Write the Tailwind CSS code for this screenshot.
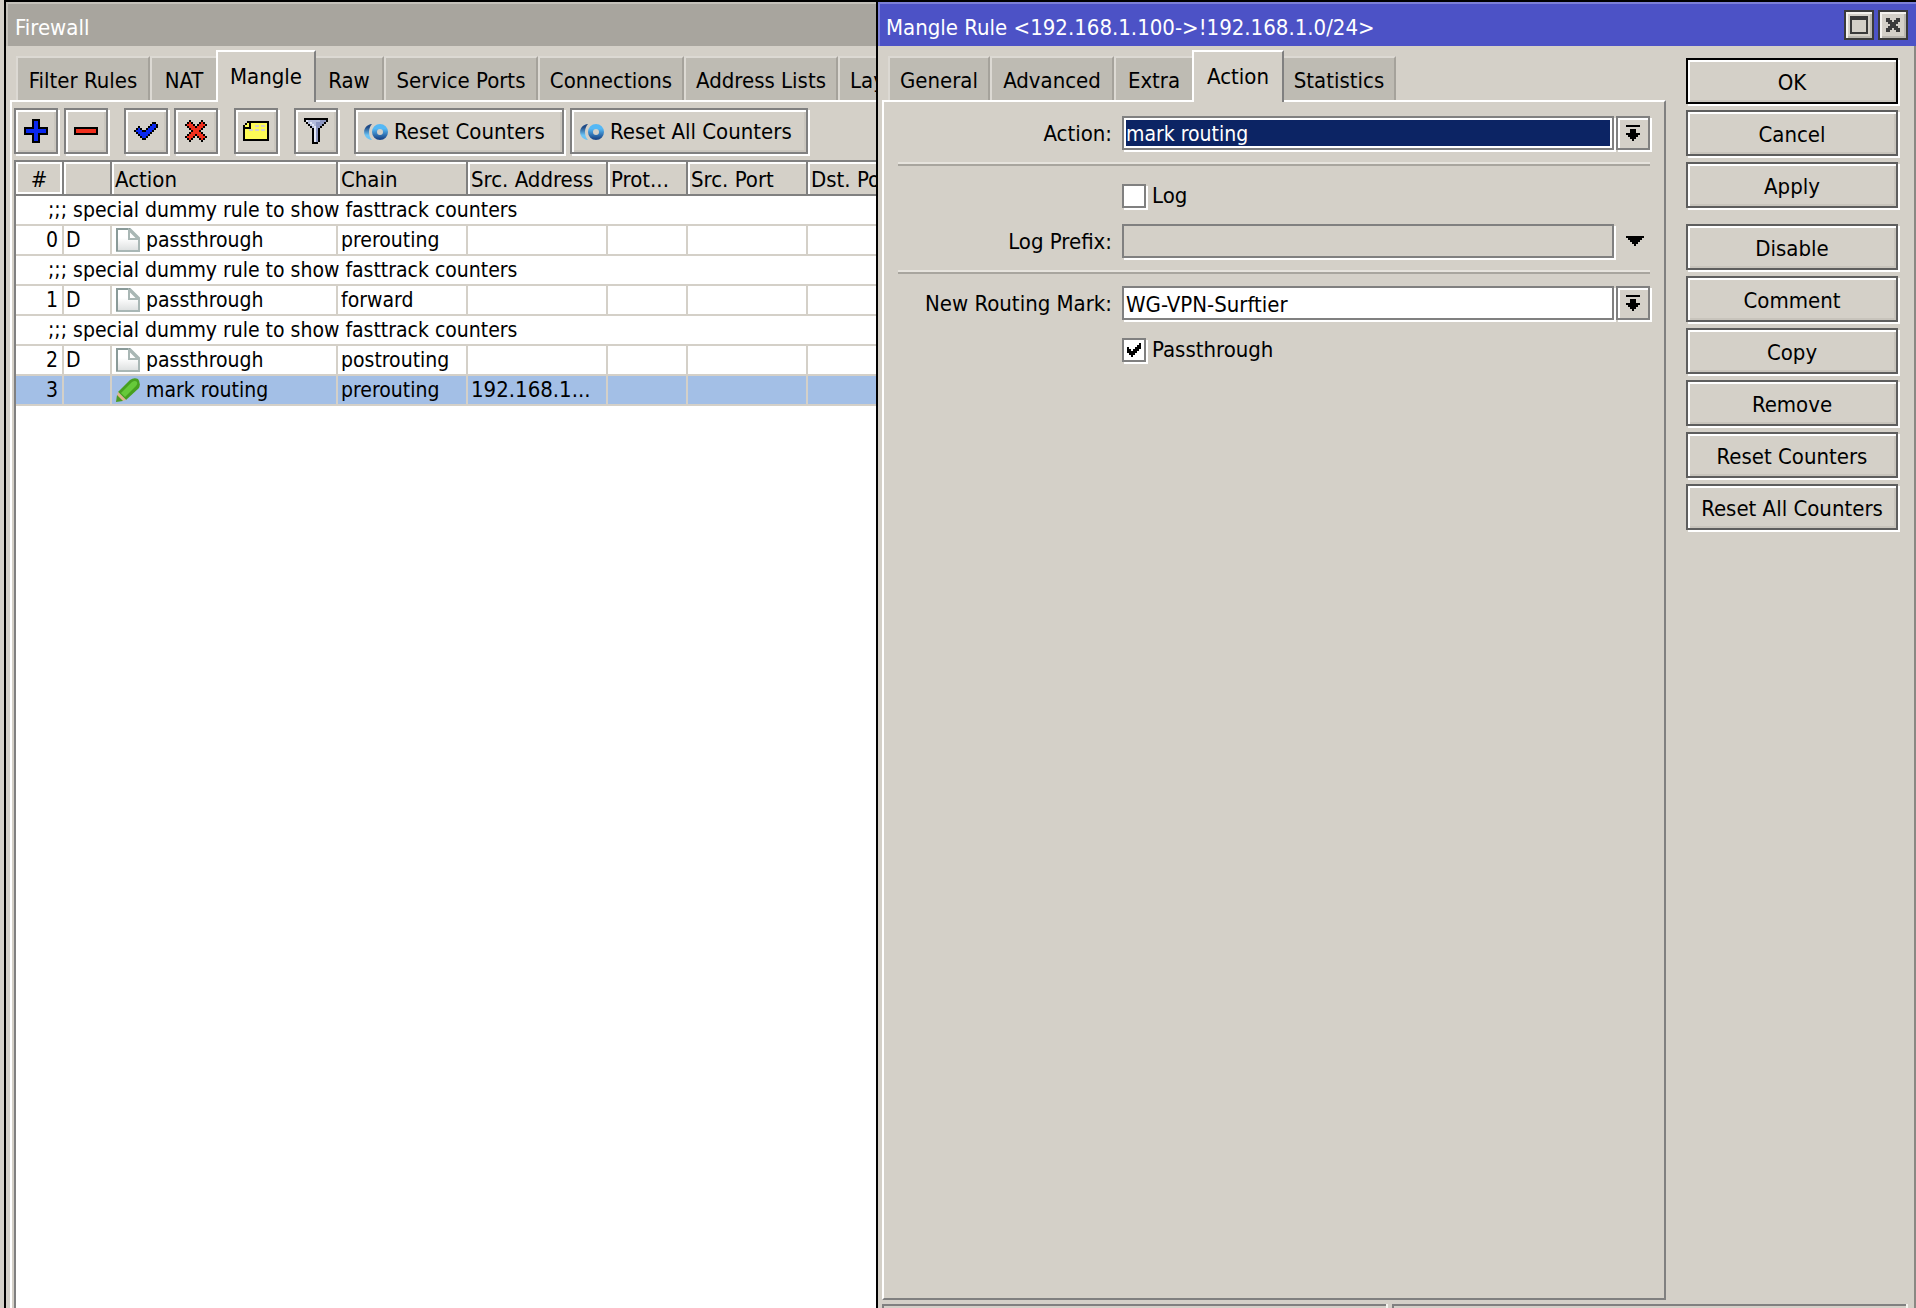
<!DOCTYPE html>
<html lang="en">
<head>
  <meta charset="UTF-8" />
  <meta name="viewport" content="width=device-width, initial-scale=1.0"/>
  <title>Firewall | Mangle Rule</title>
  <script src="https://cdn.jsdelivr.net/npm/@tailwindcss/browser@4"></script>
</head>
<body class="flex h-screen overflow-hidden bg-[#d4d0c8] pl-1 font-['DejaVu_Sans_Condensed','DejaVu_Sans',sans-serif] text-[22px] leading-7 text-black">

  <!-- Firewall window -->
  <section class="flex w-[872px] shrink-0 flex-col overflow-hidden border-l-2 border-t-2 border-black">
    <header class="h-11 shrink-0 border-l-2 border-t-2 border-[#c4c1ba] bg-[#a8a59e] pl-[7px] pt-2.5 text-white">
      <h1>Firewall</h1>
    </header>

    <nav class="flex h-[54px] shrink-0 items-end pl-2.5 whitespace-nowrap">
      <button class="h-11 w-[134px] shrink-0 border-l-2 border-r-2 border-t-2 border-[#dcd9d3] border-r-[#a5a29b] bg-[#bebbb3] pt-1">Filter Rules</button>
      <button class="h-11 w-[66px] shrink-0 border-l-2 border-t-2 border-[#dcd9d3] bg-[#bebbb3] pt-1">NAT</button>
      <button class="z-10 -mb-0.5 h-[52px] w-[100px] shrink-0 border-l-2 border-r-2 border-t-2 border-white border-r-[#808080] bg-[#d4d0c8]">Mangle</button>
      <button class="h-11 w-[68px] shrink-0 border-r-2 border-t-2 border-[#dcd9d3] border-r-[#a5a29b] bg-[#bebbb3] pt-1">Raw</button>
      <button class="h-11 w-[154px] shrink-0 border-l-2 border-r-2 border-t-2 border-[#dcd9d3] border-r-[#a5a29b] bg-[#bebbb3] pt-1">Service Ports</button>
      <button class="h-11 w-[146px] shrink-0 border-l-2 border-r-2 border-t-2 border-[#dcd9d3] border-r-[#a5a29b] bg-[#bebbb3] pt-1">Connections</button>
      <button class="h-11 w-[154px] shrink-0 border-l-2 border-r-2 border-t-2 border-[#dcd9d3] border-r-[#a5a29b] bg-[#bebbb3] pt-1">Address Lists</button>
      <button class="h-11 min-w-0 flex-1 overflow-hidden border-l-2 border-t-2 border-[#dcd9d3] bg-[#bebbb3] pl-2.5 pt-1 text-left">Layer7</button>
    </nav>

    <div class="ml-1 flex min-h-0 flex-1 flex-col border-l-2 border-t-2 border-white pl-0.5">
      <div class="flex h-[58px] shrink-0 gap-1.5 pt-1.5 whitespace-nowrap">
        <button aria-label="Add" class="grid h-[46px] w-11 place-items-center border-2 border-[#808080] shadow-[2px_2px_0_#fff,inset_2px_2px_0_#fff,inset_-2px_-2px_0_#cac6be]"><svg data-art="plus"></svg></button>
        <button aria-label="Remove" class="mr-2.5 grid h-[46px] w-11 place-items-center border-2 border-[#808080] shadow-[2px_2px_0_#fff,inset_2px_2px_0_#fff,inset_-2px_-2px_0_#cac6be]"><svg data-art="minus"></svg></button>
        <button aria-label="Enable" class="grid h-[46px] w-11 place-items-center border-2 border-[#808080] shadow-[2px_2px_0_#fff,inset_2px_2px_0_#fff,inset_-2px_-2px_0_#cac6be]"><svg data-art="check"></svg></button>
        <button aria-label="Disable" class="mr-2.5 grid h-[46px] w-11 place-items-center border-2 border-[#808080] shadow-[2px_2px_0_#fff,inset_2px_2px_0_#fff,inset_-2px_-2px_0_#cac6be]"><svg data-art="cross"></svg></button>
        <button aria-label="Comment" class="mr-2.5 grid h-[46px] w-11 place-items-center border-2 border-[#808080] shadow-[2px_2px_0_#fff,inset_2px_2px_0_#fff,inset_-2px_-2px_0_#cac6be]"><svg data-art="note"></svg></button>
        <button aria-label="Filter" class="mr-2.5 grid h-[46px] w-11 place-items-center border-2 border-[#808080] shadow-[2px_2px_0_#fff,inset_2px_2px_0_#fff,inset_-2px_-2px_0_#cac6be]"><svg data-art="funnel"></svg></button>
        <button class="flex h-[46px] w-[210px] items-center gap-1.5 border-2 border-[#808080] pl-2 pt-0.5 shadow-[2px_2px_0_#fff,inset_2px_2px_0_#fff,inset_-2px_-2px_0_#cac6be]">
          <svg width="24" height="16" viewBox="0 0 24 16" fill="none">
            <defs>
              <linearGradient id="ring" x1="0" y1="0" x2="0" y2="16" gradientUnits="userSpaceOnUse"><stop offset=".3" stop-color="#55b8f5"/><stop offset=".9" stop-color="#1c4a8c"/></linearGradient>
              <linearGradient id="arc" x1="0" y1="0" x2="0" y2="16" gradientUnits="userSpaceOnUse"><stop offset=".2" stop-color="#1f4a86"/><stop offset=".7" stop-color="#6cc4f5"/></linearGradient>
            </defs>
            <path d="M8 0C-2.500 1-2.500 15 8 16C4 12 4 4 8 0z" fill="url(#arc)"/>
            <circle cx="16" cy="8" r="5.500" stroke="url(#ring)" stroke-width="5"/>
          </svg>
          <span>Reset Counters</span>
        </button>
        <button class="flex h-[46px] w-[238px] items-center gap-1.5 border-2 border-[#808080] pl-2 pt-0.5 shadow-[2px_2px_0_#fff,inset_2px_2px_0_#fff,inset_-2px_-2px_0_#cac6be]">
          <svg width="24" height="16" viewBox="0 0 24 16" fill="none">
            <path d="M8 0C-2.500 1-2.500 15 8 16C4 12 4 4 8 0z" fill="url(#arc)"/>
            <circle cx="16" cy="8" r="5.500" stroke="url(#ring)" stroke-width="5"/>
          </svg>
          <span>Reset All Counters</span>
        </button>
      </div>

      <div class="min-h-0 flex-1 overflow-hidden border-l-2 border-t-2 border-[#808080] bg-white">
        <table class="w-[912px] table-fixed border-separate border-spacing-0 whitespace-nowrap text-left">
          <colgroup>
            <col class="w-12"><col class="w-12"><col class="w-[226px]"><col class="w-[130px]"><col class="w-[140px]"><col class="w-20"><col class="w-[120px]"><col class="w-[120px]">
          </colgroup>
          <thead class="bg-[#d4d0c8]">
            <tr class="h-[34px] *:border-b-2 *:border-r-2 *:border-[#808080] *:pt-1 *:font-normal">
              <th class="text-center shadow-[inset_0_0_0_2px_#fff]">#</th>
              <th class="shadow-[inset_2px_2px_0_#fff]"></th>
              <th class="pl-[3px] shadow-[inset_2px_2px_0_#fff]">Action</th>
              <th class="pl-[3px] shadow-[inset_2px_2px_0_#fff]">Chain</th>
              <th class="pl-[3px] shadow-[inset_2px_2px_0_#fff]">Src. Address</th>
              <th class="pl-[3px] shadow-[inset_2px_2px_0_#fff]">Prot...</th>
              <th class="pl-[3px] shadow-[inset_2px_2px_0_#fff]">Src. Port</th>
              <th class="pl-[3px] shadow-[inset_2px_2px_0_#fff]">Dst. Port</th>
            </tr>
          </thead>
          <tbody class="text-[21px]">
            <tr class="h-[30px]"><td colspan="8" class="border-b-2 border-[#d4d0c8] pl-8">;;; special dummy rule to show fasttrack counters</td></tr>
            <tr class="h-[30px] *:border-b-2 *:border-r-2 *:border-[#d4d0c8]">
              <td class="pr-1 text-right">0</td><td class="pl-0.5">D</td>
              <td class="pl-1"><div class="flex items-center gap-1.5"><svg width="24" height="24" viewBox="0 0 24 24"><use href="#page"/></svg>passthrough</div></td>
              <td class="pl-[3px]">prerouting</td><td></td><td></td><td></td><td></td>
            </tr>
            <tr class="h-[30px]"><td colspan="8" class="border-b-2 border-[#d4d0c8] pl-8">;;; special dummy rule to show fasttrack counters</td></tr>
            <tr class="h-[30px] *:border-b-2 *:border-r-2 *:border-[#d4d0c8]">
              <td class="pr-1 text-right">1</td><td class="pl-0.5">D</td>
              <td class="pl-1"><div class="flex items-center gap-1.5"><svg width="24" height="24" viewBox="0 0 24 24"><use href="#page"/></svg>passthrough</div></td>
              <td class="pl-[3px]">forward</td><td></td><td></td><td></td><td></td>
            </tr>
            <tr class="h-[30px]"><td colspan="8" class="border-b-2 border-[#d4d0c8] pl-8">;;; special dummy rule to show fasttrack counters</td></tr>
            <tr class="h-[30px] *:border-b-2 *:border-r-2 *:border-[#d4d0c8]">
              <td class="pr-1 text-right">2</td><td class="pl-0.5">D</td>
              <td class="pl-1"><div class="flex items-center gap-1.5"><svg width="24" height="24" viewBox="0 0 24 24"><use href="#page"/></svg>passthrough</div></td>
              <td class="pl-[3px]">postrouting</td><td></td><td></td><td></td><td></td>
            </tr>
            <tr class="h-[30px] bg-[#a3bfe6] *:border-b-2 *:border-r-2 *:border-[#d4d0c8]">
              <td class="pr-1 text-right">3</td><td></td>
              <td class="pl-1"><div class="flex items-center gap-1.5">
                <svg width="24" height="24" viewBox="0 0 24 24">
                  <path d="M2 14L14 2Q18-1 22 1Q25 5 23 10L10 22z" fill="#46a01f"/>
                  <path d="M5 15L16 4Q19 2 21 4Q22 6 20 8L9 19z" fill="#66c93a"/>
                  <path d="M2 14L10 22L6 23L1 18z" fill="#e0b48c"/>
                  <path d="M1 17L7 23L0 24z" fill="#4c9a22"/>
                </svg>mark routing</div></td>
              <td class="pl-[3px]">prerouting</td><td class="pl-[3px] text-[22px]">192.168.1...</td><td></td><td></td><td></td>
            </tr>
          </tbody>
        </table>
      </div>
    </div>
  </section>

  <!-- Mangle rule dialog -->
  <section class="flex min-w-0 flex-1 flex-col border-l-2 border-t-2 border-black">
    <header class="flex h-11 shrink-0 items-start border-l-2 border-t-2 border-[#7b7fd8] bg-[#4c52c6] pl-1.5 pr-2 pt-1.5 text-white">
      <h2 class="flex-1 pt-1">Mangle Rule &lt;192.168.1.100-&gt;!192.168.1.0/24&gt;</h2>
      <button aria-label="Maximize" class="mr-1 grid size-[30px] place-items-center border-2 border-[#3a3a3a] bg-[#d4d0c8] shadow-[inset_2px_2px_0_#f4f2ee,inset_-2px_-2px_0_#bab7b0]"><span class="size-[18px] border-2 border-t-4 border-[#3a3a3a]"></span></button>
      <button aria-label="Close" class="grid size-[30px] place-items-center border-2 border-[#3a3a3a] bg-[#d4d0c8] shadow-[inset_2px_2px_0_#f4f2ee,inset_-2px_-2px_0_#bab7b0]"><svg data-art="close"></svg></button>
    </header>

    <div class="flex min-h-0 flex-1 border-r-2 border-[#8a8883]">
      <div class="ml-1 flex min-w-0 flex-1 flex-col">
        <nav class="flex h-[54px] shrink-0 items-end pl-1.5 whitespace-nowrap">
          <button class="h-11 w-[102px] border-l-2 border-r-2 border-t-2 border-[#dcd9d3] border-r-[#a5a29b] bg-[#bebbb3] pt-1">General</button>
          <button class="h-11 w-[124px] border-l-2 border-r-2 border-t-2 border-[#dcd9d3] border-r-[#a5a29b] bg-[#bebbb3] pt-1">Advanced</button>
          <button class="h-11 w-[78px] border-l-2 border-t-2 border-[#dcd9d3] bg-[#bebbb3] pt-1">Extra</button>
          <button class="z-10 -mb-0.5 h-[52px] w-[92px] border-l-2 border-r-2 border-t-2 border-white border-r-[#808080] bg-[#d4d0c8]">Action</button>
          <button class="h-11 w-[112px] border-r-2 border-t-2 border-[#dcd9d3] border-r-[#a5a29b] bg-[#bebbb3] pt-1">Statistics</button>
        </nav>

        <form class="flex-1 border-2 border-white border-b-[#808080] border-r-[#808080] px-3.5 pt-3.5">
          <div class="flex items-center">
            <label for="action" class="w-[224px] pr-2.5 pt-0.5 text-right">Action:</label>
            <div class="flex-1 border-2 border-[#808080] bg-white p-0.5 shadow-[2px_2px_0_#fff]">
              <select id="action" class="block h-[26px] w-full appearance-none bg-[#0c2464] pt-0.5 text-[21px] leading-6 text-white">
                <option>mark routing</option>
              </select>
            </div>
            <button type="button" aria-label="Choose action" class="ml-0.5 grid h-[34px] w-[34px] place-items-center border-2 border-[#808080] shadow-[2px_2px_0_#fff,inset_2px_2px_0_#fff]"><svg data-art="drop"></svg></button>
          </div>

          <hr class="mt-3 border-b-2 border-t-2 border-b-[#a8a59e] border-t-[#e6e3dd]">

          <div class="mt-4 flex items-center pl-[224px]">
            <input id="log" type="checkbox" class="size-6 appearance-none border-2 border-[#808080] bg-white shadow-[2px_2px_0_#fff]">
            <label for="log" class="pl-1.5">Log</label>
          </div>

          <div class="mt-3.5 flex items-center">
            <label for="prefix" class="w-[224px] pr-2.5 pt-0.5 text-right">Log Prefix:</label>
            <input id="prefix" type="text" class="h-[34px] min-w-0 flex-1 border-2 border-[#808080] px-0.5 shadow-[2px_2px_0_#fff]">
            <button type="button" aria-label="Show log prefix" class="ml-0.5 grid h-[34px] w-[34px] place-items-center pl-1"><svg data-art="triangle"></svg></button>
          </div>

          <hr class="mt-3 border-b-2 border-t-2 border-b-[#a8a59e] border-t-[#e6e3dd]">

          <div class="mt-3 flex items-center">
            <label for="mark" class="w-[224px] pr-2.5 pt-0.5 text-right whitespace-nowrap">New Routing Mark:</label>
            <input id="mark" type="text" value="WG-VPN-Surftier" class="h-[34px] min-w-0 flex-1 border-2 border-[#808080] bg-white px-0.5 pt-0.5 shadow-[2px_2px_0_#fff]">
            <button type="button" aria-label="Choose routing mark" class="ml-0.5 grid h-[34px] w-[34px] place-items-center border-2 border-[#808080] shadow-[2px_2px_0_#fff,inset_2px_2px_0_#fff]"><svg data-art="drop"></svg></button>
          </div>

          <div class="mt-4 flex items-center pl-[224px]">
            <span class="grid place-items-center">
              <input id="pass" type="checkbox" checked class="peer col-start-1 row-start-1 size-6 appearance-none border-2 border-[#808080] bg-white shadow-[2px_2px_0_#fff]">
              <svg data-art="tick" class="pointer-events-none invisible col-start-1 row-start-1 peer-checked:visible"></svg>
            </span>
            <label for="pass" class="pl-1.5">Passthrough</label>
          </div>
        </form>
      </div>

      <div class="flex w-[248px] shrink-0 flex-col gap-1.5 pl-5 pr-4 pt-3">
        <button class="h-[46px] border-2 border-black pt-1 shadow-[2px_2px_0_#fff,inset_2px_2px_0_#fff,inset_-2px_-2px_0_#c8c4bc]">OK</button>
        <button class="h-[46px] border-2 border-[#5e5e5e] pt-1 shadow-[2px_2px_0_#fff,inset_2px_2px_0_#fff,inset_-2px_-2px_0_#c8c4bc]">Cancel</button>
        <button class="mb-2.5 h-[46px] border-2 border-[#5e5e5e] pt-1 shadow-[2px_2px_0_#fff,inset_2px_2px_0_#fff,inset_-2px_-2px_0_#c8c4bc]">Apply</button>
        <button class="h-[46px] border-2 border-[#5e5e5e] pt-1 shadow-[2px_2px_0_#fff,inset_2px_2px_0_#fff,inset_-2px_-2px_0_#c8c4bc]">Disable</button>
        <button class="h-[46px] border-2 border-[#5e5e5e] pt-1 shadow-[2px_2px_0_#fff,inset_2px_2px_0_#fff,inset_-2px_-2px_0_#c8c4bc]">Comment</button>
        <button class="h-[46px] border-2 border-[#5e5e5e] pt-1 shadow-[2px_2px_0_#fff,inset_2px_2px_0_#fff,inset_-2px_-2px_0_#c8c4bc]">Copy</button>
        <button class="h-[46px] border-2 border-[#5e5e5e] pt-1 shadow-[2px_2px_0_#fff,inset_2px_2px_0_#fff,inset_-2px_-2px_0_#c8c4bc]">Remove</button>
        <button class="h-[46px] border-2 border-[#5e5e5e] pt-1 shadow-[2px_2px_0_#fff,inset_2px_2px_0_#fff,inset_-2px_-2px_0_#c8c4bc]">Reset Counters</button>
        <button class="h-[46px] border-2 border-[#5e5e5e] pt-1 whitespace-nowrap shadow-[2px_2px_0_#fff,inset_2px_2px_0_#fff,inset_-2px_-2px_0_#c8c4bc]">Reset All Counters</button>
      </div>
    </div>

    <!-- Status bar -->
    <footer class="flex h-2 shrink-0 gap-1.5 border-r-2 border-[#8a8883] pl-1 pr-2 pt-1">
      <div class="w-[504px] border-l-2 border-t-2 border-[#808080] shadow-[2px_0_0_#f4f2ee]"></div>
      <div class="flex-1 border-l-2 border-t-2 border-[#808080] shadow-[2px_0_0_#f4f2ee]"></div>
    </footer>
  </section>

  <!-- Shared page icon -->
  <svg width="0" height="0" class="absolute">
    <defs>
      <linearGradient id="paper" x1="0" y1="0" x2="0" y2="1"><stop offset=".4" stop-color="#fff"/><stop offset="1" stop-color="#dcdfdf"/></linearGradient>
    </defs>
    <symbol id="page" viewBox="0 0 24 24">
      <path d="M1 1H14L23 10V23H1z" fill="url(#paper)" stroke="#a9b7b5" stroke-width="2"/>
      <path d="M1 23V1H14" fill="none" stroke="#8a9a98" stroke-width="2"/>
      <path d="M13 2V11H22z" fill="#fff" stroke="#a9b7b5" stroke-width="2"/>
    </symbol>
  </svg>

  <script>
    const colors = { K: '#000', D: '#3a3a3a', B: '#0a28f0', R: '#f0301e', Y: '#fdfb56', G: '#d4d0c8', W: '#e4e8f6', L: '#b4bcdc', M: '#8c96c0' };

    // each character is one 2x2 dot
    const art = {
      plus: ['....KKKK....', '....KBBK....', '....KBBK....', '....KBBK....', 'KKKKKBBKKKKK', 'KBBBBBBBBBBK', 'KBBBBBBBBBBK', 'KKKKKBBKKKKK', '....KBBK....', '....KBBK....', '....KBBK....', '....KKKK....'],
      minus: ['KKKKKKKKKKKK', 'KRRRRRRRRRRK', 'KRRRRRRRRRRK', 'KKKKKKKKKKKK'],
      check: ['.........KK.', '........KBBK', '..K....KBBBK', '.KBK..KBBBK.', 'KBBBKKBBBK..', '.KBBBBBBK...', '..KBBBBK....', '...KBBK.....', '....KK......'],
      cross: ['..K.....K..', '.KRK...KRK.', 'KRRRK.KRRRK', '.KRRRKRRRK.', '..KRRRRRK..', '...KRRRK...', '..KRRRRRK..', '.KRRRKRRRK.', 'KRRRK.KRRRK', '.KRK...KRK.', '..K.....K..'],
      note: ['..KKKKKKKKKKK', '.KYKYYYYYYYYK', 'KYYKYYGGYGGYK', 'KKKKYYYYYYYYK', 'KYYGGYGGYGGYK', 'KYYYYYYYYYYYK', 'KYYYYYYYYYYYK', 'KYYYYYYYYYYYK', 'KYYYYYYYYYYYK', 'KKKKKKKKKKKKK'],
      funnel: ['KKKKKKKKKKKK', 'KWLLLLLLMMMK', '.KLWLLMMMMK.', '..KLWLMMMK..', '...KLWMMK...', '....KWMK....', '....KWMK....', '....KWMK....', '....KWMK....', '....KWMK....', '....KWMK....', '....KWMK....', '....KKK.....'],
      close: ['DD...DD', 'DDD.DDD', '.DDDDD.', '..DDD..', '.DDDDD.', 'DDD.DDD', 'DD...DD'],
      drop: ['KKKKKKK', '.......', '..KKK..', '..KKK..', 'KKKKKKK', '.KKKKK.', '..KKK..', '...K...'],
      triangle: ['KKKKKKKKK', '.KKKKKKK.', '..KKKKK..', '...KKK...', '....K....'],
      tick: ['......K', '.....KK', 'K...KKK', 'KK.KKK.', 'KKKKK..', '.KKK...', '..K....']
    };

    document.querySelectorAll('svg[data-art]').forEach(svg => {
      const rows = art[svg.dataset.art];
      const w = rows[0].length, h = rows.length;
      svg.setAttribute('width', w * 2);
      svg.setAttribute('height', h * 2);
      svg.setAttribute('viewBox', `0 0 ${w} ${h}`);
      svg.setAttribute('shape-rendering', 'crispEdges');
      svg.innerHTML = rows.map((row, y) => [...row].map((c, x) =>
        c === '.' ? '' : `<rect x="${x}" y="${y}" width="1" height="1" fill="${colors[c]}"/>`).join('')).join('');
    });
  </script>
</body>
</html>
